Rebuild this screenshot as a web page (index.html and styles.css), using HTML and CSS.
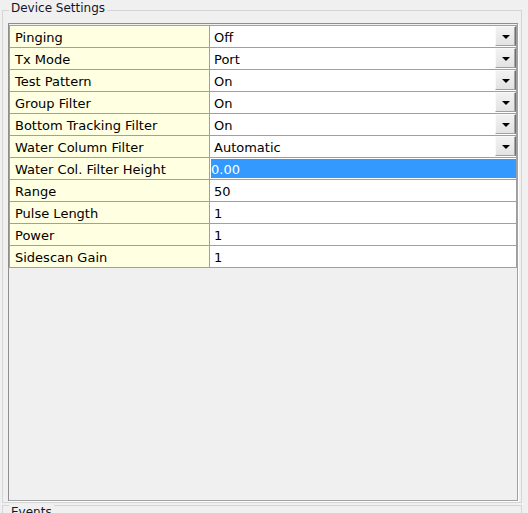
FILE: index.html
```html
<!DOCTYPE html>
<html>
<head>
<meta charset="utf-8">
<link rel="stylesheet" href="styles.css">
</head>
<body>
<div class="group">
  <div class="title">Device Settings</div>
  <div class="panel">
    <div class="grid">
      <div class="label">Pinging</div>
      <div class="value combo"><span class="text">Off</span><span class="btn"><svg width="8" height="4" viewBox="0 0 8 4"><polygon points="0,0 8,0 4,4" fill="#000"/></svg></span></div>
      <div class="label">Tx Mode</div>
      <div class="value combo"><span class="text">Port</span><span class="btn"><svg width="8" height="4" viewBox="0 0 8 4"><polygon points="0,0 8,0 4,4" fill="#000"/></svg></span></div>
      <div class="label">Test Pattern</div>
      <div class="value combo"><span class="text">On</span><span class="btn"><svg width="8" height="4" viewBox="0 0 8 4"><polygon points="0,0 8,0 4,4" fill="#000"/></svg></span></div>
      <div class="label">Group Filter</div>
      <div class="value combo"><span class="text">On</span><span class="btn"><svg width="8" height="4" viewBox="0 0 8 4"><polygon points="0,0 8,0 4,4" fill="#000"/></svg></span></div>
      <div class="label">Bottom Tracking Filter</div>
      <div class="value combo"><span class="text">On</span><span class="btn"><svg width="8" height="4" viewBox="0 0 8 4"><polygon points="0,0 8,0 4,4" fill="#000"/></svg></span></div>
      <div class="label">Water Column Filter</div>
      <div class="value combo"><span class="text">Automatic</span><span class="btn"><svg width="8" height="4" viewBox="0 0 8 4"><polygon points="0,0 8,0 4,4" fill="#000"/></svg></span></div>
      <div class="label">Water Col. Filter Height</div>
      <div class="value sel"><span class="hl">0.00</span></div>
      <div class="label">Range</div>
      <div class="value">50</div>
      <div class="label">Pulse Length</div>
      <div class="value">1</div>
      <div class="label">Power</div>
      <div class="value">1</div>
      <div class="label">Sidescan Gain</div>
      <div class="value">1</div>
    </div>
  </div>
</div>
<div class="group events">
  <div class="title ev-title">Events</div>
</div>
</body>
</html>
```
FILE: styles.css
```css
html, body {
  margin: 0;
  padding: 0;
}
body {
  width: 528px;
  height: 513px;
  overflow: hidden;
  background: #f0f0f0;
  font-family: "DejaVu Sans", sans-serif;
  color: #000;
}
.group {
  margin: 10px 6px 0 2px;
  border: 1px solid #d5d5d5;
  padding: 0 3px 1px 5px;
}
.title {
  margin: -11px 0 0 1px;
  padding: 0 2px;
  width: fit-content;
  background: #f0f0f0;
  font-size: 12px;
  line-height: 16px;
  color: #14142e;
}
.panel {
  margin-top: 7px;
  width: 510px;
  height: 478px;
  box-sizing: border-box;
  border: 1px solid #8e8e8e;
  border-right-color: #a0a0a0;
  border-bottom-color: #a0a0a0;
  box-shadow: 1px 1px 0 #ffffff;
  padding-top: 1px;
  background: #f0f0f0;
}
.grid {
  display: grid;
  grid-template-columns: 199px 306px;
  grid-auto-rows: 21px;
  gap: 1px;
  width: 508px;
  box-sizing: border-box;
  border: 1px solid #a0a0a0;
  background: #a0a0a0;
  font-size: 13px;
}
.label {
  background: #ffffe1;
  padding: 1px 0 0 5px;
  line-height: 21px;
  white-space: nowrap;
  overflow: hidden;
}
.value {
  background: #ffffff;
  padding: 1px 0 0 4px;
  line-height: 21px;
  white-space: nowrap;
  overflow: hidden;
}
.combo {
  display: flex;
  padding-top: 0;
}
.combo .text {
  flex: 1;
  padding-top: 1px;
}
.btn {
  width: 21px;
  height: 20px;
  box-sizing: border-box;
  background: linear-gradient(#f2f2f2, #e3e3e3);
  border-left: 1px solid #fafafa;
  border-top: 1px solid #fafafa;
  border-right: 1px solid #6f6f6f;
  border-bottom: 1px solid #a0a0a0;
  box-shadow: inset -1px 0 0 #a8a8a8;
  display: flex;
  align-items: center;
  justify-content: center;
  padding-top: 1px;
}
.btn svg {
  display: block;
}
.value.sel {
  padding: 1px 0 1px 1px;
}
.hl {
  display: block;
  height: 19px;
  overflow: hidden;
  line-height: 21px;
  background: #3399ff;
  color: #ffffff;
}
.events {
  margin-top: 2px;
  height: 40px;
  padding: 0 3px 0 5px;
}
.ev-title {
  margin-top: -2px;
}
```
